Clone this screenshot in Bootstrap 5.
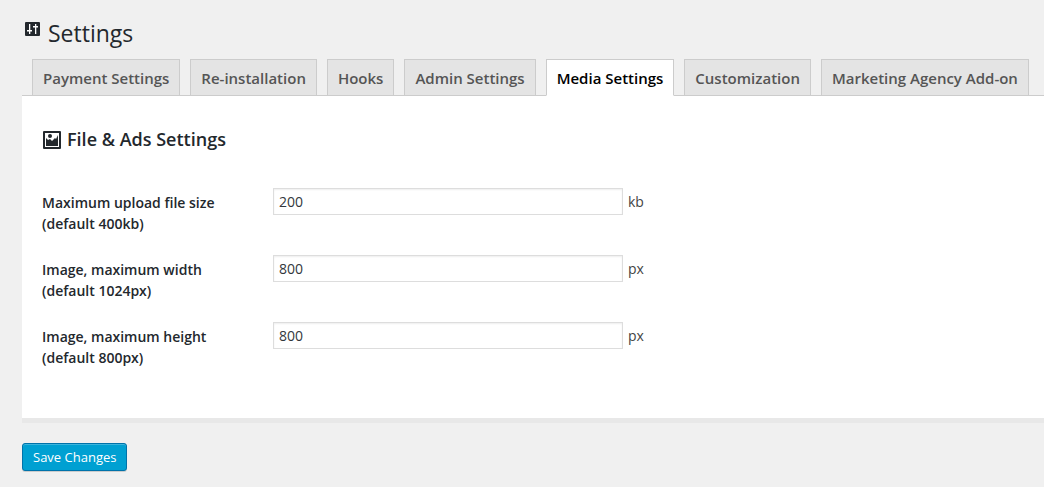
<!DOCTYPE html>
<html lang="en">
<head>
<meta charset="utf-8">
<meta name="viewport" content="width=device-width, initial-scale=1">
<title>Settings</title>
<link href="https://cdn.jsdelivr.net/npm/bootstrap@5.3.0/dist/css/bootstrap.min.css" rel="stylesheet">
<style>
body { background: #f0f0f0; color: #444; font: 14px/21px "Open Sans", sans-serif; }
.page-wrap { padding: 18px 0 16px 22px; }
.page-title { font-size: 23px; line-height: 30px; font-weight: 400; color: #23282d; gap: 8px; padding-left: 3px; margin-bottom: 11px; }
.page-title svg { margin-top: 4px; }
.settings-tabs { --bs-nav-tabs-border-width: 1px; --bs-nav-tabs-border-color: #ccc; gap: 10px; padding-left: 10px; }
.settings-tabs .nav-link { font-size: 15px; line-height: 24px; font-weight: 600; color: #555; background: #e4e4e4; border: 1px solid #ccc; border-radius: 0; padding: 6px 10px 5px; white-space: nowrap; }
.settings-tabs .nav-link.active { color: #000; background: #fff; border-color: #ccc #ccc #fff; }
.panel { background: #fff; border-bottom: 5px solid #e8e8e8; padding: 31px 20px 54px; margin-bottom: 20px; }
.panel-title { font-size: 18px; line-height: 24px; font-weight: 600; color: #23282d; gap: 6px; margin-bottom: 37px; }
.panel-title svg { margin-top: 2px; }
.setting-rows { gap: 25px; }
.setting-label { width: 231px; padding-right: 40px; padding-top: 4px; margin-bottom: -4px; font-weight: 600; color: #23282d; }
.setting-input { width: 350px; height: 27px; font-size: 14px; line-height: 21px; color: #32373c; padding: 2px 5px; border: 1px solid #ddd; border-radius: 0; box-shadow: inset 0 1px 2px rgba(0,0,0,.07); }
.unit { padding: 3px 0 0 5px; }
.btn-save { --bs-btn-color: #fff; --bs-btn-bg: #00a0d2; --bs-btn-border-color: #0073aa; --bs-btn-hover-color: #fff; --bs-btn-hover-bg: #0091cd; --bs-btn-hover-border-color: #0073aa; font-size: 13px; line-height: 26px; padding: 0 10px; border-radius: 3px; box-shadow: inset 0 1px 0 rgba(120,200,230,.5), 0 1px 0 rgba(0,0,0,.15); }
</style>
</head>
<body>
<main class="page-wrap">
  <h1 class="page-title d-flex align-items-start">
    <svg width="15" height="14" viewBox="0 0 15 14" aria-hidden="true"><rect width="15" height="14" rx="1" fill="#23282d"/><path d="M4 2h1.300v10H4zM2 8h5v1.500H2zM10 2h1.300v10H10zM8 4h5v1.500H8z" fill="#fff"/></svg>
    Settings
  </h1>
  <ul class="nav nav-tabs flex-nowrap settings-tabs">
    <li class="nav-item"><a class="nav-link" href="#payment">Payment Settings</a></li>
    <li class="nav-item"><a class="nav-link" href="#reinstall">Re-installation</a></li>
    <li class="nav-item"><a class="nav-link" href="#hooks">Hooks</a></li>
    <li class="nav-item"><a class="nav-link" href="#admin">Admin Settings</a></li>
    <li class="nav-item"><a class="nav-link active" aria-current="page" href="#media">Media Settings</a></li>
    <li class="nav-item"><a class="nav-link" href="#custom">Customization</a></li>
    <li class="nav-item"><a class="nav-link" href="#agency">Marketing Agency Add-on</a></li>
  </ul>
  <form>
    <section class="panel" id="media">
      <h2 class="panel-title d-flex align-items-center">
        <svg width="19" height="18" viewBox="0 0 19 18" aria-hidden="true"><rect x="1" width="18" height="18" rx="1" fill="#23282d"/><path d="M3 2h14v14H3z" fill="#fff"/><circle cx="8" cy="5" r="2" fill="#23282d"/><path d="M4 15V7l2 2 2-1 2 2 3-3 1 1 2-4v11z" fill="#23282d"/></svg>
        File &amp; Ads Settings
      </h2>
      <div class="setting-rows d-flex flex-column">
        <div class="d-flex align-items-start">
          <label class="setting-label flex-shrink-0" for="maxsize">Maximum upload file size (default 400kb)</label>
          <input class="form-control setting-input" id="maxsize" type="text" value="200"><span class="unit">kb</span>
        </div>
        <div class="d-flex align-items-start">
          <label class="setting-label flex-shrink-0" for="maxwidth">Image, maximum width (default 1024px)</label>
          <input class="form-control setting-input" id="maxwidth" type="text" value="800"><span class="unit">px</span>
        </div>
        <div class="d-flex align-items-start">
          <label class="setting-label flex-shrink-0" for="maxheight">Image, maximum height (default 800px)</label>
          <input class="form-control setting-input" id="maxheight" type="text" value="800"><span class="unit">px</span>
        </div>
      </div>
    </section>
    <button class="btn btn-save" type="submit">Save Changes</button>
  </form>
</main>
<script src="https://cdn.jsdelivr.net/npm/bootstrap@5.3.0/dist/js/bootstrap.bundle.min.js"></script>
</body>
</html>
